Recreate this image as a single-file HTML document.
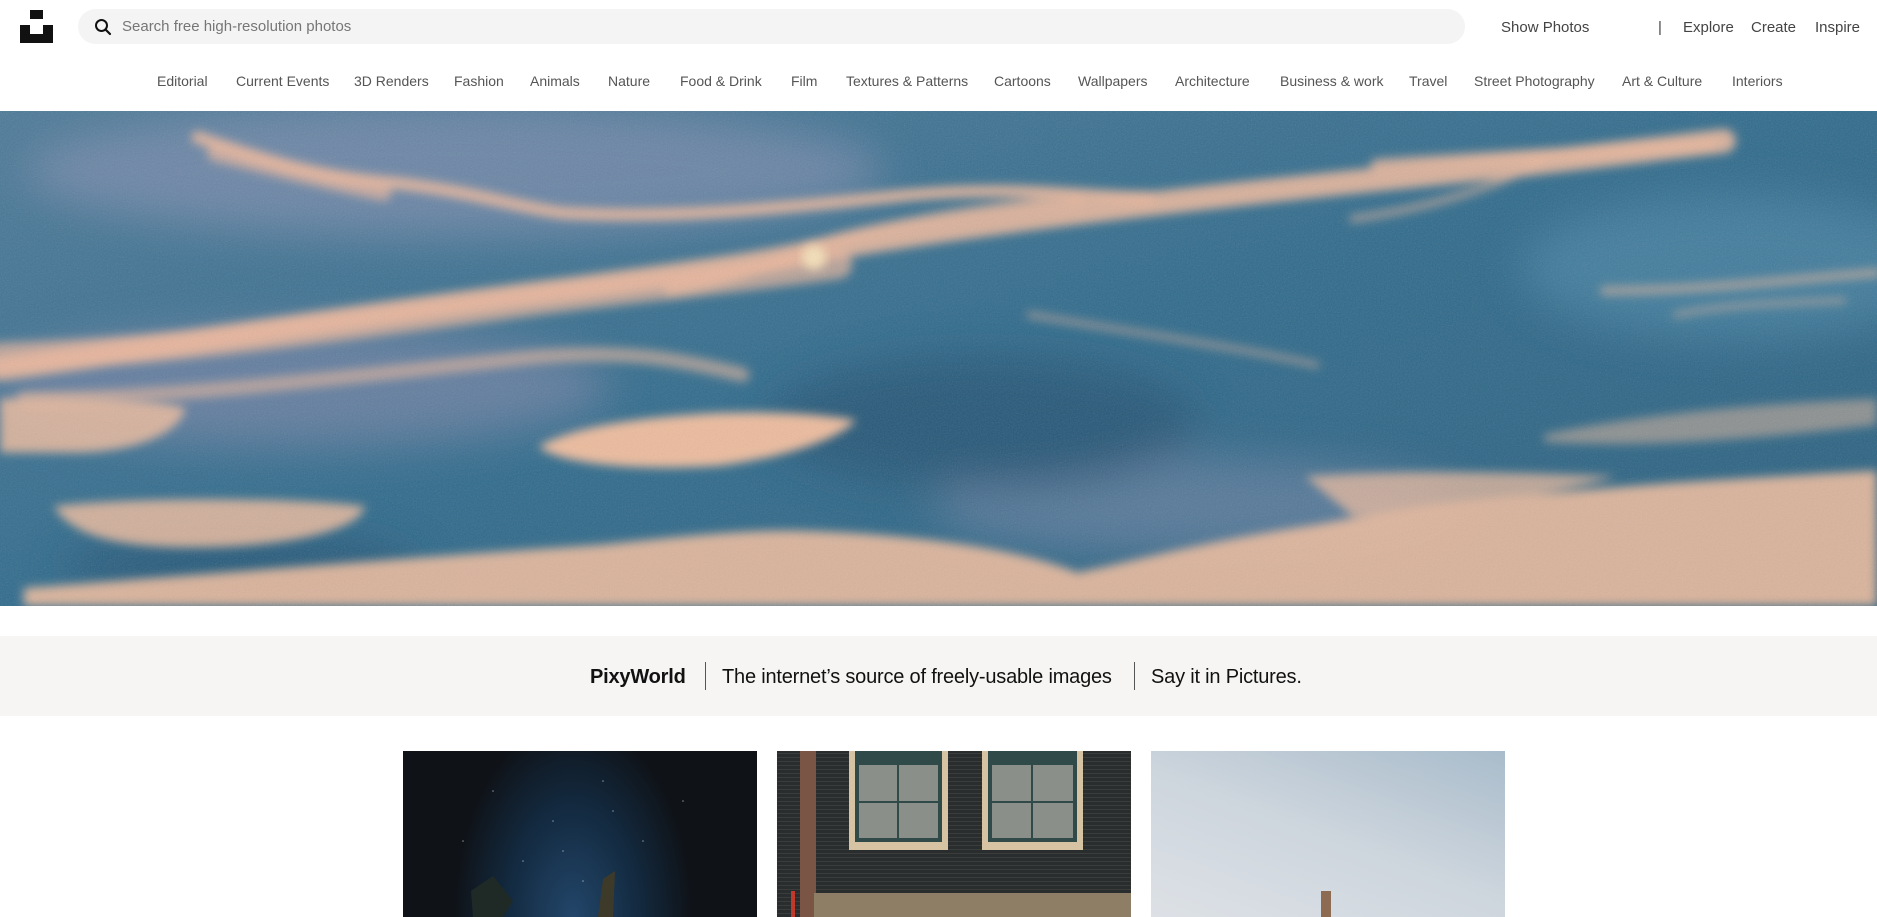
<!DOCTYPE html>
<html><head><meta charset="utf-8">
<style>
*{margin:0;padding:0;box-sizing:border-box}
html,body{width:1877px;height:917px;overflow:hidden;background:#fff;font-family:"Liberation Sans",Arial,sans-serif}
.abs{position:absolute}
.logo1{left:30px;top:10px;width:13px;height:9px;background:#111}
.logo2{left:20px;top:25px;width:33px;height:18px;background:#111}
.logo2:after{content:"";position:absolute;left:10px;top:0;width:13px;height:9px;background:#fff}
.search{left:78px;top:9px;width:1387px;height:35px;border-radius:18px;background:#f4f4f4}
.search span{position:absolute;left:44px;top:9px;font-size:15px;color:#767676}
.top{top:19px;font-size:15px;color:#444}
.nav{position:absolute;top:73px;font-size:14px;color:#555;white-space:nowrap}
.hero{left:0;top:111px;width:1877px;height:495px}
.band{left:0;top:636px;width:1877px;height:80px;background:#f6f5f3}
.tag{position:absolute;top:666px;font-size:20px;color:#111;white-space:nowrap;letter-spacing:-0.2px}
.sep{position:absolute;top:662px;width:1px;height:28px;background:#555}
.card{position:absolute;top:751px;width:354px;height:166px;overflow:hidden}
</style></head><body>
<div class="abs logo1"></div><div class="abs logo2"></div>
<div class="abs search">
<svg class="abs" style="left:16px;top:9px" width="18" height="18" viewBox="0 0 18 18"><circle cx="7.5" cy="7.5" r="5.5" fill="none" stroke="#111" stroke-width="2"/><line x1="11.5" y1="11.5" x2="16" y2="16" stroke="#111" stroke-width="2.2" stroke-linecap="round"/></svg>
<span>Search free high-resolution photos</span></div>
<div class="abs top" style="left:1501px">Show Photos</div>
<div class="abs top" style="left:1658px">|</div>
<div class="abs top" style="left:1683px">Explore</div>
<div class="abs top" style="left:1751px">Create</div>
<div class="abs top" style="left:1815px">Inspire</div>

<div class="nav" style="left:157px">Editorial</div>
<div class="nav" style="left:236px">Current Events</div>
<div class="nav" style="left:354px">3D Renders</div>
<div class="nav" style="left:454px">Fashion</div>
<div class="nav" style="left:530px">Animals</div>
<div class="nav" style="left:608px">Nature</div>
<div class="nav" style="left:680px">Food &amp; Drink</div>
<div class="nav" style="left:791px">Film</div>
<div class="nav" style="left:846px">Textures &amp; Patterns</div>
<div class="nav" style="left:994px">Cartoons</div>
<div class="nav" style="left:1078px">Wallpapers</div>
<div class="nav" style="left:1175px">Architecture</div>
<div class="nav" style="left:1280px">Business &amp; work</div>
<div class="nav" style="left:1409px">Travel</div>
<div class="nav" style="left:1474px">Street Photography</div>
<div class="nav" style="left:1622px">Art &amp; Culture</div>
<div class="nav" style="left:1732px">Interiors</div>

<svg class="abs hero" viewBox="0 0 1568 413" preserveAspectRatio="none">
<defs>
<linearGradient id="bg" x1="0" y1="0" x2="1" y2="1"><stop offset="0" stop-color="#4d7a98"/><stop offset=".5" stop-color="#306b8c"/><stop offset="1" stop-color="#2b607f"/></linearGradient>
<filter id="b" x="-20%" y="-50%" width="140%" height="200%"><feGaussianBlur stdDeviation="4"/></filter>
<filter id="b2" x="-20%" y="-50%" width="140%" height="200%"><feGaussianBlur stdDeviation="18"/></filter>
<filter id="n"><feTurbulence type="fractalNoise" baseFrequency="0.9" numOctaves="2" result="t"/><feColorMatrix type="saturate" values="0"/><feComponentTransfer><feFuncA type="table" tableValues="0 0.18"/></feComponentTransfer></filter>
</defs>
<rect width="1568" height="413" fill="url(#bg)"/>
<g filter="url(#b2)" opacity=".65">
<ellipse cx="380" cy="50" rx="360" ry="55" fill="#8290b0"/>
<ellipse cx="250" cy="230" rx="260" ry="50" fill="#7a86a8"/>
<ellipse cx="1000" cy="330" rx="220" ry="40" fill="#6d84a4"/>
<ellipse cx="1450" cy="130" rx="180" ry="60" fill="#4e88a7"/>
<ellipse cx="820" cy="260" rx="180" ry="55" fill="#24506f"/>
<ellipse cx="200" cy="380" rx="150" ry="25" fill="#24506f"/>
</g>
<g filter="url(#b)" fill="none" stroke="#e9b79c" stroke-linecap="round">
<path d="M165 22 C220 40 260 55 330 60 C400 68 430 80 470 85 C560 90 640 82 760 70 C850 62 910 72 960 72" stroke-width="10" opacity=".9"/>
<path d="M180 35 C240 50 280 60 320 68" stroke-width="14" opacity=".7"/>
<path d="M0 215 C150 195 300 170 480 148 C600 132 650 125 690 115 C800 95 1000 72 1200 52 C1300 42 1380 32 1440 25" stroke-width="20" opacity=".9"/>
<path d="M0 205 C120 202 250 185 400 165 C520 148 620 140 700 128" stroke-width="24" opacity=".7"/>
<path d="M20 240 C150 240 300 220 450 205 C520 200 560 205 620 220" stroke-width="12" opacity=".6"/>
<path d="M560 150 C620 140 660 120 690 110 C720 100 820 80 900 75" stroke-width="10" opacity=".8"/>
<path d="M1150 45 C1250 38 1330 35 1430 28" stroke-width="10" opacity=".8"/>
<path d="M1130 90 C1200 80 1260 60 1290 40" stroke-width="6" opacity=".6"/>
<path d="M860 170 C950 185 1050 200 1100 212" stroke-width="5" opacity=".55"/>
<path d="M1340 150 C1420 150 1500 140 1568 135" stroke-width="7" opacity=".6"/>
<path d="M1400 170 C1450 160 1500 160 1540 158" stroke-width="5" opacity=".5"/>
</g>
<circle cx="680" cy="122" r="10" fill="#f4e0b8" filter="url(#b)"/>
<g filter="url(#b)" fill="#ecbb9d">
<path d="M450 280 C480 262 540 255 600 252 C660 250 700 255 715 258 C700 275 650 290 600 296 C540 300 470 296 450 280Z"/>
<path d="M0 240 C60 238 130 240 155 248 C150 270 110 285 60 285 L0 285Z" opacity=".85"/>
<path d="M45 330 C100 322 250 322 305 330 C300 350 240 364 160 364 C100 364 60 355 45 330Z" opacity=".85"/>
<path d="M20 398 C150 388 350 372 500 362 C560 356 610 350 660 350 C760 352 850 365 900 385 C950 375 1000 360 1100 345 C1200 325 1300 318 1400 310 C1480 305 1530 302 1568 300 L1568 413 L20 413Z" opacity=".9"/>
<path d="M1090 305 C1150 300 1250 300 1350 305 C1300 320 1200 333 1130 338Z" opacity=".75"/>
<path d="M1290 270 C1360 255 1450 245 1568 240 L1568 262 C1480 272 1380 282 1290 276Z" opacity=".5"/>
</g>
<rect width="1568" height="413" filter="url(#n)"/>
</svg>

<div class="abs band"></div>
<div class="tag" style="left:590px;font-weight:bold">PixyWorld</div>
<div class="sep" style="left:705px"></div>
<div class="tag" style="left:722px">The internet’s source of freely-usable images</div>
<div class="sep" style="left:1134px"></div>
<div class="tag" style="left:1151px">Say it in Pictures.</div>

<div class="card" style="left:403px;background:radial-gradient(ellipse 120px 200px at 48% 100%,#23466a 0%,#132a40 55%,#0f1217 100%)">
<svg width="354" height="166" style="position:absolute;left:0;top:0">
<g fill="#cfd8e6" opacity=".6"><circle cx="90" cy="40" r=".8"/><circle cx="150" cy="70" r=".8"/><circle cx="200" cy="30" r=".8"/><circle cx="120" cy="110" r=".8"/><circle cx="240" cy="90" r=".8"/><circle cx="180" cy="130" r=".8"/><circle cx="60" cy="90" r=".8"/><circle cx="280" cy="50" r=".8"/><circle cx="160" cy="100" r=".8"/><circle cx="210" cy="60" r=".8"/></g>
<path d="M68 140 L90 125 L110 150 L100 166 L70 166Z" fill="#1f2a26"/>
<path d="M200 128 L212 120 L210 166 L195 166Z" fill="#3d3a2a"/>
</svg></div>

<div class="card" style="left:777px;background:repeating-linear-gradient(0deg,#2a2d2d 0 3px,#3a3d3c 3px 4px)">
<div class="abs" style="left:23px;top:0;width:16px;height:166px;background:#7a5444"></div>
<div class="abs" style="left:72px;top:0;width:99px;height:99px;background:#d6c3a4"></div>
<div class="abs" style="left:78px;top:0;width:87px;height:91px;background:#2f4a48"></div>
<div class="abs" style="left:82px;top:14px;width:79px;height:73px;background:#8b8f8a"></div>
<div class="abs" style="left:120px;top:14px;width:2px;height:73px;background:#2f4a48"></div>
<div class="abs" style="left:82px;top:50px;width:79px;height:2px;background:#2f4a48"></div>
<div class="abs" style="left:205px;top:0;width:101px;height:99px;background:#d6c3a4"></div>
<div class="abs" style="left:211px;top:0;width:89px;height:91px;background:#2f4a48"></div>
<div class="abs" style="left:215px;top:14px;width:81px;height:73px;background:#8b8f8a"></div>
<div class="abs" style="left:254px;top:14px;width:2px;height:73px;background:#2f4a48"></div>
<div class="abs" style="left:215px;top:50px;width:81px;height:2px;background:#2f4a48"></div>
<div class="abs" style="left:37px;top:142px;width:317px;height:24px;background:#8e7e66"></div>
<div class="abs" style="left:14px;top:140px;width:4px;height:26px;background:#c0392b"></div>
</div>

<div class="card" style="left:1151px;background:linear-gradient(200deg,#a9bccb 0%,#cdd5dd 50%,#dde1e6 100%)">
<div class="abs" style="left:170px;top:140px;width:10px;height:26px;background:#8c6b52"></div>
</div>
</body></html>
